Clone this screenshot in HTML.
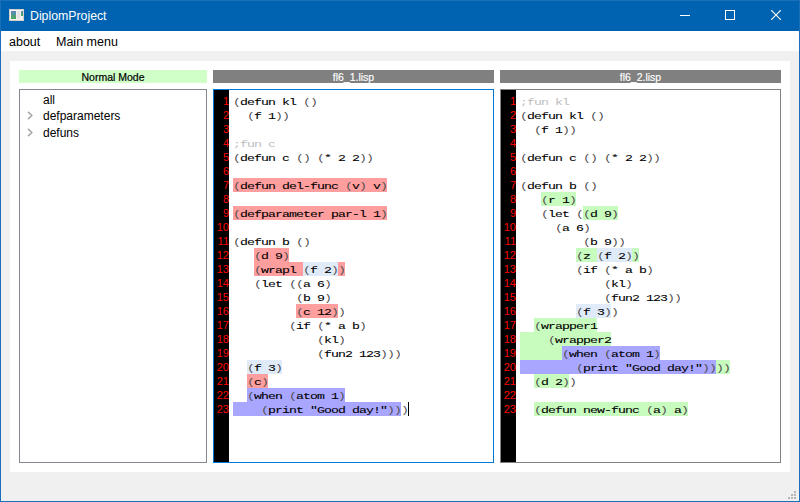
<!DOCTYPE html>
<html><head><meta charset="utf-8"><title>DiplomProject</title>
<style>
*{margin:0;padding:0;box-sizing:border-box}
html,body{width:800px;height:502px;overflow:hidden;background:#f0f0f0;font-family:"Liberation Sans",sans-serif}
.abs{position:absolute}
#win{position:absolute;left:0;top:0;width:800px;height:502px;background:#f0f0f0}
.bd{position:absolute;background:#1a6fb8}
#title{position:absolute;left:0;top:0;width:800px;height:31px;background:#0063b1}
#ttext{position:absolute;left:30px;top:8px;font-size:12.3px;color:#fff;line-height:16px;white-space:nowrap}
#menu{position:absolute;left:1px;top:31px;width:798px;height:20px;background:#fff}
.mi{position:absolute;top:34px;font-size:12.5px;line-height:16px;color:#000;white-space:nowrap}
#panel{position:absolute;left:10px;top:61px;width:780px;height:411px;background:#fff}
#mode{position:absolute;left:19px;top:70px;width:188px;height:13px;background:#d0ffc8;font-size:10.5px;line-height:15px;text-align:center;color:#000;-webkit-text-stroke:0.2px #000}
.hdr{position:absolute;top:70px;height:13px;background:#808080;font-size:10.5px;line-height:15px;text-align:center;color:#fff;white-space:nowrap;-webkit-text-stroke:0.15px #fff}
#tree{position:absolute;left:19px;top:89px;width:188px;height:374px;border:1px solid #828790;background:#fff}
.ti{position:absolute;left:43px;font-size:12px;line-height:16px;color:#000;white-space:nowrap}
.chev{position:absolute;left:26px;width:7px;height:9px}
.ed{position:absolute;top:89px;width:281px;height:374px;border:1px solid #828282;background:#fff}
.gut{position:absolute;left:0;top:0;width:15px;height:100%;background:#000}
.hl{position:absolute;height:14px}
.ln{position:absolute;width:15px;height:14px;text-align:right;color:#ff0000;font-size:11px;line-height:14px;font-family:"Liberation Sans",sans-serif}
.code{position:absolute;white-space:pre;font-family:"Liberation Mono",monospace;font-size:12px;letter-spacing:-0.836px;line-height:14px;color:#000;font-weight:normal;-webkit-text-stroke:0.1px #000;transform:scale(1.1,0.8);transform-origin:0 0;margin-top:3px}
.cm{color:#bdbdbd;-webkit-text-stroke:0}
.code i{font-style:normal;color:#505050;-webkit-text-stroke:0}
.cur{position:absolute;width:1px;height:14px;background:#000}
</style></head>
<body>
<div id="win">
<div id="title">
 <svg class="abs" style="left:9px;top:9px" width="16" height="12" viewBox="0 0 16 12">
  <rect x="0" y="0" width="15" height="12" fill="#f2f2f2"/>
  <rect x="0.5" y="0.5" width="14" height="11" fill="none" stroke="#d8d0c8"/>
  <defs><linearGradient id="g" x1="0" y1="0" x2="0" y2="1"><stop offset="0" stop-color="#5a86c0"/><stop offset="1" stop-color="#4caa55"/></linearGradient></defs>
  <rect x="2" y="2" width="5" height="8" fill="url(#g)"/>
  <rect x="8" y="2" width="3" height="8" fill="#e2e2e2"/>
  <rect x="12" y="2" width="2" height="5" fill="url(#g)"/>
 </svg>
 <div id="ttext">DiplomProject</div>
 <div class="abs" style="left:680px;top:15px;width:10px;height:1px;background:#fff"></div>
 <div class="abs" style="left:725px;top:10px;width:10px;height:10px;border:1px solid #fff"></div>
 <svg class="abs" style="left:771px;top:10px" width="10" height="10" viewBox="0 0 10 10"><path d="M0 0L10 10M10 0L0 10" stroke="#fff" stroke-width="1.1"/></svg>
</div>
<div id="menu"></div>
<div class="mi" style="left:9px">about</div>
<div class="mi" style="left:56px">Main menu</div>
<div id="panel"></div>
<div id="mode">Normal Mode</div>
<div class="hdr" style="left:213px;width:281px">fl6_1.lisp</div>
<div class="hdr" style="left:500px;width:281px">fl6_2.lisp</div>
<div id="tree"></div>
<div class="ti" style="top:92px">all</div>
<svg class="chev" style="top:111px" viewBox="0 0 7 9"><path d="M2 0.9L5.8 4.5L2 8.1" fill="none" stroke="#a6a6a6" stroke-width="1.5"/></svg>
<div class="ti" style="top:108px">defparameters</div>
<svg class="chev" style="top:128px" viewBox="0 0 7 9"><path d="M2 0.9L5.8 4.5L2 8.1" fill="none" stroke="#a6a6a6" stroke-width="1.5"/></svg>
<div class="ti" style="top:125px">defuns</div>
<div class="ed" style="left:213px;border-color:#0078d7"><div class="gut"></div></div>
<div class="hl" style="left:233px;top:178px;width:154px;background:#ff9e9e"></div>
<div class="hl" style="left:233px;top:206px;width:154px;background:#ff9e9e"></div>
<div class="hl" style="left:254px;top:248px;width:35px;background:#ff9e9e"></div>
<div class="hl" style="left:254px;top:262px;width:49px;background:#ff9e9e"></div>
<div class="hl" style="left:303px;top:262px;width:35px;background:#e0ebfa"></div>
<div class="hl" style="left:338px;top:262px;width:7px;background:#ff9e9e"></div>
<div class="hl" style="left:296px;top:304px;width:42px;background:#ff9e9e"></div>
<div class="hl" style="left:247px;top:360px;width:35px;background:#e0ebfa"></div>
<div class="hl" style="left:247px;top:374px;width:21px;background:#ff9e9e"></div>
<div class="hl" style="left:247px;top:388px;width:98px;background:#a9a6ff"></div>
<div class="hl" style="left:233px;top:402px;width:168px;background:#a9a6ff"></div>
<div class="ln" style="left:214px;top:94px">1</div>
<div class="code" style="left:233px;top:94px"><i>(</i>defun kl <i>(</i><i>)</i></div>
<div class="ln" style="left:214px;top:108px">2</div>
<div class="code" style="left:233px;top:108px">  <i>(</i>f 1<i>)</i><i>)</i></div>
<div class="ln" style="left:214px;top:122px">3</div>
<div class="ln" style="left:214px;top:136px">4</div>
<div class="code cm" style="left:233px;top:136px">;fun c</div>
<div class="ln" style="left:214px;top:150px">5</div>
<div class="code" style="left:233px;top:150px"><i>(</i>defun c <i>(</i><i>)</i> <i>(</i>* 2 2<i>)</i><i>)</i></div>
<div class="ln" style="left:214px;top:164px">6</div>
<div class="ln" style="left:214px;top:178px">7</div>
<div class="code" style="left:233px;top:178px"><i>(</i>defun del-func <i>(</i>v<i>)</i> v<i>)</i></div>
<div class="ln" style="left:214px;top:192px">8</div>
<div class="ln" style="left:214px;top:206px">9</div>
<div class="code" style="left:233px;top:206px"><i>(</i>defparameter par-l 1<i>)</i></div>
<div class="ln" style="left:214px;top:220px">10</div>
<div class="ln" style="left:214px;top:234px">11</div>
<div class="code" style="left:233px;top:234px"><i>(</i>defun b <i>(</i><i>)</i></div>
<div class="ln" style="left:214px;top:248px">12</div>
<div class="code" style="left:233px;top:248px">   <i>(</i>d 9<i>)</i></div>
<div class="ln" style="left:214px;top:262px">13</div>
<div class="code" style="left:233px;top:262px">   <i>(</i>wrapl <i>(</i>f 2<i>)</i><i>)</i></div>
<div class="ln" style="left:214px;top:276px">14</div>
<div class="code" style="left:233px;top:276px">   <i>(</i>let <i>(</i><i>(</i>a 6<i>)</i></div>
<div class="ln" style="left:214px;top:290px">15</div>
<div class="code" style="left:233px;top:290px">         <i>(</i>b 9<i>)</i></div>
<div class="ln" style="left:214px;top:304px">16</div>
<div class="code" style="left:233px;top:304px">         <i>(</i>c 12<i>)</i><i>)</i></div>
<div class="ln" style="left:214px;top:318px">17</div>
<div class="code" style="left:233px;top:318px">        <i>(</i>if <i>(</i>* a b<i>)</i></div>
<div class="ln" style="left:214px;top:332px">18</div>
<div class="code" style="left:233px;top:332px">            <i>(</i>kl<i>)</i></div>
<div class="ln" style="left:214px;top:346px">19</div>
<div class="code" style="left:233px;top:346px">            <i>(</i>fun2 123<i>)</i><i>)</i><i>)</i></div>
<div class="ln" style="left:214px;top:360px">20</div>
<div class="code" style="left:233px;top:360px">  <i>(</i>f 3<i>)</i></div>
<div class="ln" style="left:214px;top:374px">21</div>
<div class="code" style="left:233px;top:374px">  <i>(</i>c<i>)</i></div>
<div class="ln" style="left:214px;top:388px">22</div>
<div class="code" style="left:233px;top:388px">  <i>(</i>when <i>(</i>atom 1<i>)</i></div>
<div class="ln" style="left:214px;top:402px">23</div>
<div class="code" style="left:233px;top:402px">    <i>(</i>print &quot;Good day!&quot;<i>)</i><i>)</i><i>)</i></div>
<div class="cur" style="left:408px;top:402px"></div>
<div class="ed" style="left:500px;border-color:#828282"><div class="gut"></div></div>
<div class="hl" style="left:541px;top:192px;width:35px;background:#c8fbbe"></div>
<div class="hl" style="left:583px;top:206px;width:35px;background:#c8fbbe"></div>
<div class="hl" style="left:576px;top:248px;width:21px;background:#c8fbbe"></div>
<div class="hl" style="left:597px;top:248px;width:35px;background:#e0ebfa"></div>
<div class="hl" style="left:632px;top:248px;width:7px;background:#c8fbbe"></div>
<div class="hl" style="left:576px;top:304px;width:35px;background:#e0ebfa"></div>
<div class="hl" style="left:534px;top:318px;width:63px;background:#c8fbbe"></div>
<div class="hl" style="left:520px;top:332px;width:91px;background:#c8fbbe"></div>
<div class="hl" style="left:520px;top:346px;width:42px;background:#c8fbbe"></div>
<div class="hl" style="left:562px;top:346px;width:98px;background:#a9a6ff"></div>
<div class="hl" style="left:520px;top:360px;width:196px;background:#a9a6ff"></div>
<div class="hl" style="left:716px;top:360px;width:14px;background:#c8fbbe"></div>
<div class="hl" style="left:534px;top:374px;width:35px;background:#c8fbbe"></div>
<div class="hl" style="left:534px;top:402px;width:154px;background:#c8fbbe"></div>
<div class="ln" style="left:501px;top:94px">1</div>
<div class="code cm" style="left:520px;top:94px">;fun kl</div>
<div class="ln" style="left:501px;top:108px">2</div>
<div class="code" style="left:520px;top:108px"><i>(</i>defun kl <i>(</i><i>)</i></div>
<div class="ln" style="left:501px;top:122px">3</div>
<div class="code" style="left:520px;top:122px">  <i>(</i>f 1<i>)</i><i>)</i></div>
<div class="ln" style="left:501px;top:136px">4</div>
<div class="ln" style="left:501px;top:150px">5</div>
<div class="code" style="left:520px;top:150px"><i>(</i>defun c <i>(</i><i>)</i> <i>(</i>* 2 2<i>)</i><i>)</i></div>
<div class="ln" style="left:501px;top:164px">6</div>
<div class="ln" style="left:501px;top:178px">7</div>
<div class="code" style="left:520px;top:178px"><i>(</i>defun b <i>(</i><i>)</i></div>
<div class="ln" style="left:501px;top:192px">8</div>
<div class="code" style="left:520px;top:192px">   <i>(</i>r 1<i>)</i></div>
<div class="ln" style="left:501px;top:206px">9</div>
<div class="code" style="left:520px;top:206px">   <i>(</i>let <i>(</i><i>(</i>d 9<i>)</i></div>
<div class="ln" style="left:501px;top:220px">10</div>
<div class="code" style="left:520px;top:220px">     <i>(</i>a 6<i>)</i></div>
<div class="ln" style="left:501px;top:234px">11</div>
<div class="code" style="left:520px;top:234px">         <i>(</i>b 9<i>)</i><i>)</i></div>
<div class="ln" style="left:501px;top:248px">12</div>
<div class="code" style="left:520px;top:248px">        <i>(</i>z <i>(</i>f 2<i>)</i><i>)</i></div>
<div class="ln" style="left:501px;top:262px">13</div>
<div class="code" style="left:520px;top:262px">        <i>(</i>if <i>(</i>* a b<i>)</i></div>
<div class="ln" style="left:501px;top:276px">14</div>
<div class="code" style="left:520px;top:276px">            <i>(</i>kl<i>)</i></div>
<div class="ln" style="left:501px;top:290px">15</div>
<div class="code" style="left:520px;top:290px">            <i>(</i>fun2 123<i>)</i><i>)</i></div>
<div class="ln" style="left:501px;top:304px">16</div>
<div class="code" style="left:520px;top:304px">        <i>(</i>f 3<i>)</i><i>)</i></div>
<div class="ln" style="left:501px;top:318px">17</div>
<div class="code" style="left:520px;top:318px">  <i>(</i>wrapper1</div>
<div class="ln" style="left:501px;top:332px">18</div>
<div class="code" style="left:520px;top:332px">    <i>(</i>wrapper2</div>
<div class="ln" style="left:501px;top:346px">19</div>
<div class="code" style="left:520px;top:346px">      <i>(</i>when <i>(</i>atom 1<i>)</i></div>
<div class="ln" style="left:501px;top:360px">20</div>
<div class="code" style="left:520px;top:360px">        <i>(</i>print &quot;Good day!&quot;<i>)</i><i>)</i><i>)</i><i>)</i></div>
<div class="ln" style="left:501px;top:374px">21</div>
<div class="code" style="left:520px;top:374px">  <i>(</i>d 2<i>)</i><i>)</i></div>
<div class="ln" style="left:501px;top:388px">22</div>
<div class="ln" style="left:501px;top:402px">23</div>
<div class="code" style="left:520px;top:402px">  <i>(</i>defun new-func <i>(</i>a<i>)</i> a<i>)</i></div>
<div class="bd" style="left:0;top:0;width:1px;height:502px"></div><div class="bd" style="left:799px;top:0;width:1px;height:502px"></div><div class="bd" style="left:0;top:501px;width:800px;height:1px"></div><div class="bd" style="left:0;top:0;width:800px;height:1px"></div>
<svg class="abs" style="left:788px;top:491px" width="10" height="10" viewBox="0 0 10 10" fill="#b4b4b4"><rect x="6" y="0" width="2" height="2"/><rect x="3" y="3" width="2" height="2"/><rect x="6" y="3" width="2" height="2"/><rect x="0" y="6" width="2" height="2"/><rect x="3" y="6" width="2" height="2"/><rect x="6" y="6" width="2" height="2"/></svg>
</div>
</body></html>
